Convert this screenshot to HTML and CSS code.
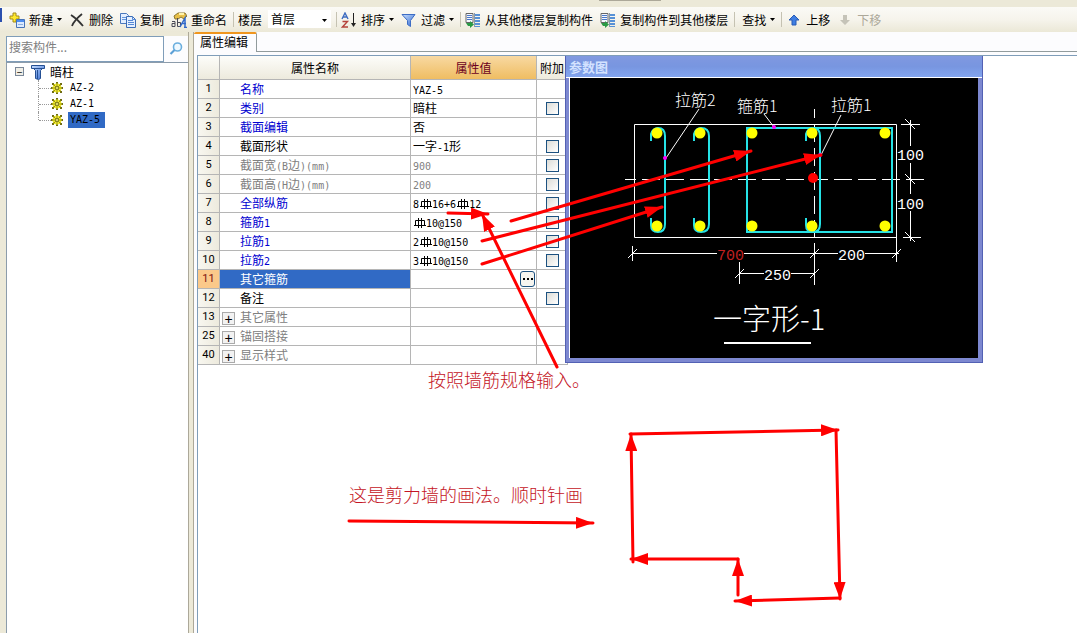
FILE: index.html
```html
<!DOCTYPE html>
<html lang="zh-CN">
<head>
<meta charset="utf-8">
<title>属性编辑</title>
<link rel="stylesheet" href="styles.css">
</head>
<body>
<svg class="defs" width="0" height="0" aria-hidden="true">
  <defs>
    <linearGradient id="blueFill" x1="0" y1="0" x2="1" y2="1"><stop offset="0" stop-color="#c9e0ff"/><stop offset="1" stop-color="#2f66cf"/></linearGradient>
    <symbol id="gear" viewBox="0 0 12 12">
      <path d="M5 0h2v2h2V1h2v2h-1v2h2v2h-2v2h1v2H9v-1H7v2H5v-2H3v1H1V9h1V7H0V5h2V3H1V1h2v1h2z" fill="#6f6c14"/>
      <circle cx="6" cy="6" r="4.500" fill="#f4ee2a"/>
      <path d="M6 2v8M2 6h8M3 3l6 6M9 3l-6 6" stroke="#6d6a10" stroke-width=".7"/>
      <circle cx="6" cy="6" r="1.500" fill="#fffb80" stroke="#55520c" stroke-width=".7"/>
    </symbol>
    <symbol id="rebar" viewBox="0 0 12 12">
      <path d="M4.500 1v10M7.500 1v10M1.500 3.500h9v5h-9zM0 8.500h12" fill="none" stroke="#000"/>
    </symbol>
    <symbol id="caret" viewBox="0 0 5 3"><path d="M0 0h5L2.500 3z" fill="#000"/></symbol>
    <symbol id="copyFloor" viewBox="0 0 16 16">
      <path d="M1 1.500h7v9H1z" fill="#f5f8ff" stroke="#666"/>
      <path d="M2 3.500h5M2 5.500h5M2 7.500h5" stroke="#4a78c8"/>
      <path d="M10 2h5v2h-5zM10 5h5v2h-5zM10 8h5v2h-5zM10 11h5v2h-5zM10 14h5v1h-5z" fill="#5791d6"/>
      <path d="M9.500 1v14" stroke="#8899aa"/>
      <path d="M1 11h4V9l4 3.500L5 16v-2H3z" fill="#2a9a45"/>
    </symbol>
  </defs>
</svg>

<div class="app">
  <div class="frame-top"><span class="frame-notch"></span></div>
  <nav class="toolbar" aria-label="工具栏">
    <button class="tool"><svg class="icon" viewBox="0 0 16 16"><path d="M4 1h3v3h3v3H7v3H4V7H1V4h3z" fill="#ffe92d" stroke="#a28b1d"/><path d="M7.500 7.500h8v8h-8z" fill="#dceaff" stroke="#4773b8"/><path d="M8 8h7v2H8z" fill="#4d8cf0"/><path d="M9 12.500h5" stroke="#90b0dd"/></svg>新建<svg class="caret"><use href="#caret"/></svg></button>
    <button class="tool"><svg class="icon" viewBox="0 0 16 16"><path d="M2 3C7 6 10 9 14 14M13 2C8 6 5 9 3 14" fill="none" stroke="#333" stroke-width="1.800"/></svg>删除</button>
    <button class="tool"><svg class="icon" viewBox="0 0 16 16"><path d="M.5 1.500h6l2 2v8h-8z" fill="#e4efff" stroke="#4a78bd"/><path d="M2 5.500h5M2 7.500h5" stroke="#6698dd"/><path d="M6.500 4.500h6l3 3v8h-9z" fill="#e4efff" stroke="#3c6cb5"/><path d="M12.500 4.500v3h3M8 8.500h5M8 10.500h6M8 12.500h6" fill="none" stroke="#5588d5"/></svg>复制</button>
    <button class="tool"><svg class="icon" viewBox="0 0 16 16"><path d="M3 4l4-3h7l2 3-3 3-3-2-3 2H4z" fill="#e8bf47" stroke="#8b762f"/><path d="M8 2h5" stroke="#fff2a8" stroke-width="2"/><path d="M1 9.500h3v5H1v-3h3M6.500 6v8.500h3v-4H7" fill="none" stroke="#4b4b58"/><path d="M9 15l5-9v9M11 11.500h4M13 15.500h3" fill="none" stroke="#3269ca" stroke-width="1.500"/></svg>重命名</button>
    <span class="sep"></span>
    <label class="tool-label" for="floor">楼层</label>
    <span class="combo"><select id="floor"><option>首层</option></select><svg class="caret"><use href="#caret"/></svg></span>
    <span class="sep"></span>
    <button class="tool"><svg class="icon" viewBox="0 0 16 16"><path d="M1 7l3-6 3 6M2 5h4" fill="none" stroke="#3e6cc0" stroke-width="1.400"/><path d="M1.500 9.500h5l-5 5.500h5.500" fill="none" stroke="#b5433c" stroke-width="1.400"/><path d="M12.500 1v12" stroke="#222"/><path d="M10 11h5l-2.500 4z" fill="#222"/></svg>排序<svg class="caret"><use href="#caret"/></svg></button>
    <button class="tool"><svg class="icon" viewBox="0 0 16 16"><path d="M1 2.500h13L9.500 8.500v6l-3-2v-4z" fill="url(#blueFill)" stroke="#3c6cc4"/></svg>过滤<svg class="caret"><use href="#caret"/></svg></button>
    <span class="sep"></span>
    <button class="tool"><svg class="icon"><use href="#copyFloor"/></svg>从其他楼层复制构件</button>
    <button class="tool"><svg class="icon"><use href="#copyFloor"/></svg>复制构件到其他楼层</button>
    <span class="sep"></span>
    <button class="tool tool-text">查找<svg class="caret"><use href="#caret"/></svg></button>
    <span class="sep"></span>
    <button class="tool"><svg class="icon" viewBox="0 0 16 16"><path d="M8 3l5 5h-3v5H6V8H3z" fill="#3f7ee2" stroke="#285bb5"/></svg>上移</button>
    <button class="tool" disabled><svg class="icon" viewBox="0 0 16 16"><path d="M8 13L3 8h3V3h4v5h3z" fill="#c5c3b8"/></svg>下移</button>
  </nav>

  <div class="body">
    <aside class="sidebar">
      <form class="search">
        <input type="text" placeholder="搜索构件..." aria-label="搜索构件">
        <button type="button" aria-label="搜索"><svg class="icon" viewBox="0 0 16 16"><circle cx="9.500" cy="6" r="4" fill="#eef8ff" stroke="#6aaede" stroke-width="1.600"/><path d="M6.500 9L2.500 13" stroke="#5b9fd6" stroke-width="2.200"/></svg></button>
      </form>
      <div class="tree">
        <div class="tree-root">
          <button class="expander" aria-label="折叠">−</button>
          <svg class="icon" viewBox="0 0 16 16"><path d="M1.500 1.500h13v3h-2l-2 2v8l-2 1-3-1v-8l-2-2h-2z" fill="url(#blueFill)" stroke="#244f93"/><path d="M2 4.500h12M7.500 6v9" stroke="#244f93"/></svg>
          <span>暗柱</span>
        </div>
        <ul class="tree-items">
          <li><svg class="gear"><use href="#gear"/></svg><span class="node">AZ-2</span></li>
          <li><svg class="gear"><use href="#gear"/></svg><span class="node">AZ-1</span></li>
          <li><svg class="gear"><use href="#gear"/></svg><span class="node selected">YAZ-5</span></li>
        </ul>
      </div>
    </aside>
    <div class="splitter"></div>
    <main class="main">
      <div class="tabs"><button class="tab">属性编辑</button><span class="tab-line"></span></div>
      <section class="panel">
        <table class="props">
          <colgroup><col class="c-num"><col class="c-name"><col class="c-value"><col class="c-extra"></colgroup>
          <thead><tr><th></th><th>属性名称</th><th class="hot">属性值</th><th>附加</th></tr></thead>
          <tbody>
            <tr><th>1</th><td class="link">名称</td><td><span class="code">YAZ-5</span></td><td></td></tr>
            <tr><th>2</th><td class="link">类别</td><td>暗柱</td><td><input type="checkbox" aria-label="类别附加"></td></tr>
            <tr><th>3</th><td class="link">截面编辑</td><td>否</td><td></td></tr>
            <tr><th>4</th><td>截面形状</td><td>一字<span class="code">-1</span>形</td><td><input type="checkbox" aria-label="截面形状附加"></td></tr>
            <tr class="muted"><th>5</th><td>截面宽<span class="code">(B</span>边<span class="code">)(mm)</span></td><td><span class="code">900</span></td><td><input type="checkbox" aria-label="截面宽附加"></td></tr>
            <tr class="muted"><th>6</th><td>截面高<span class="code">(H</span>边<span class="code">)(mm)</span></td><td><span class="code">200</span></td><td><input type="checkbox" aria-label="截面高附加"></td></tr>
            <tr><th>7</th><td class="link">全部纵筋</td><td><span class="code">8<svg class="rebar"><use href="#rebar"/></svg>16+6<svg class="rebar"><use href="#rebar"/></svg>12</span></td><td><input type="checkbox" aria-label="全部纵筋附加"></td></tr>
            <tr><th>8</th><td class="link">箍筋<span class="code">1</span></td><td><span class="code"><svg class="rebar"><use href="#rebar"/></svg>10@150</span></td><td><input type="checkbox" aria-label="箍筋1附加"></td></tr>
            <tr><th>9</th><td class="link">拉筋<span class="code">1</span></td><td><span class="code">2<svg class="rebar"><use href="#rebar"/></svg>10@150</span></td><td><input type="checkbox" aria-label="拉筋1附加"></td></tr>
            <tr><th>10</th><td class="link">拉筋<span class="code">2</span></td><td><span class="code">3<svg class="rebar"><use href="#rebar"/></svg>10@150</span></td><td><input type="checkbox" aria-label="拉筋2附加"></td></tr>
            <tr class="current"><th>11</th><td>其它箍筋</td><td><button class="more" aria-label="更多"><svg viewBox="0 0 10 2"><path d="M0 0h2v2H0zM4 0h2v2H4zM8 0h2v2H8z"/></svg></button></td><td></td></tr>
            <tr><th>12</th><td>备注</td><td></td><td><input type="checkbox" aria-label="备注附加"></td></tr>
            <tr class="group"><th>13</th><td><button class="plus" aria-label="展开">+</button>其它属性</td><td></td><td></td></tr>
            <tr class="group"><th>25</th><td><button class="plus" aria-label="展开">+</button>锚固搭接</td><td></td><td></td></tr>
            <tr class="group"><th>40</th><td><button class="plus" aria-label="展开">+</button>显示样式</td><td></td><td></td></tr>
          </tbody>
        </table>

        <section class="dialog" aria-label="参数图">
          <h2>参数图</h2>
          <svg class="drawing" viewBox="570 78 408 280">
            <g class="thin">
              <path d="M634.500 124.500h262v113h-262z"/>
              <path d="M625 179.500h299" stroke-dasharray="18 6" stroke-dashoffset="7"/>
              <path d="M814.500 109v128" stroke-dasharray="18 6" stroke-dashoffset="9"/>
              <path d="M699 109l-33 49M764 114l10 13M841 115l-20 40"/>
              <path d="M901 124.500h19M903 237.500h18M910.500 120v26M910.500 163v31M910.500 211v30"/>
              <path d="M905 119l10 10M905 174l10 10M905 232l10 10"/>
              <path d="M632 253.500h85M744 253.500h94M865 253.500h34M632.500 246v15M814.500 243v42M896.500 237v25"/>
              <path d="M628 258l9-9M810 258l9-9M892 258l9-9"/>
              <path d="M739 273.500h25M791 273.500h24M739.500 262v22M735 278l9-9M810 278l9-9"/>
            </g>
            <path d="M724 343h87" stroke="#fff" stroke-width="2"/>
            <g class="bars">
              <path d="M651 141v-7q2-6 7-6 7 0 7 8v88q0 8-7 8-7 0-7-7v-7"/>
              <path d="M694 141v-7q2-6 7-6 8 0 8 8v88q0 8-8 8-7 0-7-7v-7"/>
              <path d="M806 141v-7q2-6 7-6 7 0 7 8v88q0 8-7 8-7 0-7-7v-7"/>
              <path d="M747 128h145v104H747z"/>
            </g>
            <g fill="#ff0">
              <circle cx="657" cy="133" r="5.500"/><circle cx="700" cy="133" r="5.500"/><circle cx="752" cy="133" r="5.500"/><circle cx="812" cy="133" r="5.500"/><circle cx="885" cy="133" r="5.500"/>
              <circle cx="657" cy="226" r="5.500"/><circle cx="700" cy="226" r="5.500"/><circle cx="752" cy="226" r="5.500"/><circle cx="812" cy="226" r="5.500"/><circle cx="885" cy="226" r="5.500"/>
            </g>
            <circle cx="813" cy="178" r="5" fill="red"/>
            <g fill="#f0f"><circle cx="665" cy="158" r="2"/><circle cx="774" cy="127" r="2"/><circle cx="820" cy="155" r="2"/></g>
            <g class="names"><text x="675" y="106">拉筋2</text><text x="737" y="112">箍筋1</text><text x="831" y="111">拉筋1</text></g>
            <g class="dims"><text x="897" y="160">100</text><text x="897" y="209">100</text><text class="red" x="717" y="260">700</text><text x="838" y="260">200</text><text x="764" y="280">250</text></g>
            <text class="caption" x="713" y="330">一字形-1</text>
          </svg>
        </section>
      </section>
    </main>
  </div>

  <svg class="notes" viewBox="0 0 1077 633" width="1077" height="633">
    <defs><marker id="head" markerUnits="userSpaceOnUse" markerWidth="17" markerHeight="12" refX="17" refY="6" orient="auto"><path d="M0 0l17 6-17 6z" fill="red"/></marker></defs>
    <g class="arrows">
      <path d="M448 213L488 214"/>
      <path d="M557 367L482 214"/>
      <path d="M511 221L751 151"/>
      <path d="M482 241L821 155"/>
      <path d="M482 264L662 207"/>
      <path d="M349 521L593 523"/>
      <path d="M630 434L838 430"/>
      <path d="M836 430L840 599"/>
      <path d="M840 598L735 601"/>
      <path d="M738 595L738 559"/>
      <path d="M738 559L631 559"/>
      <path d="M633 562L631 434"/>
    </g>
    <text x="428" y="387">按照墙筋规格输入。</text>
    <text x="349" y="502">这是剪力墙的画法。顺时针画</text>
  </svg>
</div>
</body>
</html>
```
FILE: styles.css
```css
* { box-sizing: border-box; }

body {
  margin: 0;
  background: #ece9d8;
  color: #000;
  font: 12px/16px "Noto Sans CJK SC", sans-serif;
}

button, input, select { font: inherit; color: inherit; margin: 0; }
button { padding: 0; border: 0; background: none; }

.defs { position: absolute; }

.app {
  position: relative;
  display: flex;
  flex-direction: column;
  min-height: 100vh;
  overflow: hidden;
}

.frame-top { height: 7px; display: flex; justify-content: center; padding-left: 182px; }
.frame-notch { width: 62px; height: 1px; background: #aca899; }

.toolbar {
  display: flex;
  align-items: center;
  height: 25px;
  padding-left: 6px;
  white-space: nowrap;
  background: linear-gradient(#fbfaf6, #f6f4ec 50%, #ebe8d7);
}
.toolbar::before {
  content: "";
  width: 2px;
  height: 14px;
  margin: 0 4px 10px -6px;
  background: #2a4fae;
}

.tool { display: flex; flex: none; align-items: center; gap: 4px; padding: 0 4px 0 3px; }
.tool-text { padding-left: 6px; }
.tool:disabled { color: #aca899; }
.tool-label { padding: 0 3px; }
.icon { width: 16px; height: 16px; flex: none; }
.caret { width: 5px; height: 3px; flex: none; }
.sep { flex: none; width: 1px; height: 15px; margin: 0 1px 0 2px; background: #c5c2b2; }

.combo { position: relative; flex: none; width: 63px; height: 20px; margin: 0 3px; }
.combo select {
  display: block;
  appearance: none;
  width: 100%;
  height: 18px;
  padding: 0 12px 0 3px;
  border: 0;
  background: #fff;
}
.combo .caret { position: absolute; right: 4px; top: 9px; }

.body { display: flex; flex: 1; padding-left: 6px; }

.sidebar { flex: none; width: 182px; display: flex; flex-direction: column; padding-top: 4px; }
.search { display: flex; height: 26px; background: #fcfcfe; }
.search input {
  flex: 1;
  min-width: 0;
  padding: 0 2px 4px;
  border: 1px solid #7f9db9;
  background: #fff;
}
.search input::placeholder { color: #808080; opacity: 1; }
.search button { width: 24px; display: grid; place-items: center; }

.tree { flex: 1; padding: 0 8px; background: #fff; border: 1px solid #8c9cab; border-width: 1px 0 0 1px; }
.tree-root { display: flex; align-items: center; height: 17px; }
.expander {
  width: 9px;
  height: 9px;
  margin-right: 6px;
  border: 1px solid #7b8899;
  background: #f1efe6;
  font-size: 10px;
  line-height: 6px;
}
.tree-root span { margin-left: 4px; }
.tree-items { list-style: none; margin: 0 0 0 23px; padding: 0; }
.tree-items li { display: flex; align-items: center; height: 16px; border-left: 1px dotted #999; }
.tree-items li:last-child { position: relative; border-color: transparent; }
.tree-items li:last-child::after {
  content: "";
  position: absolute;
  left: -1px;
  top: 0;
  height: 8px;
  border-left: 1px dotted #999;
}
.tree-items li::before { content: ""; width: 12px; border-top: 1px dotted #999; }
.gear { width: 12px; height: 12px; }
.node { margin-left: 5px; padding: 0 2px; }
.node, .code { font-family: "DejaVu Sans Mono", monospace; font-size: 10px; }
.code { line-height: 10px; }
.selected { padding-right: 5px; background: #316ac5; }

.splitter { flex: none; width: 6px; border: 1px solid #aca899; border-width: 0 1px; }

.main { flex: 1; min-width: 0; display: flex; flex-direction: column; background: #fcfcfe; }
.tabs { display: flex; height: 20px; margin-bottom: 3px; }
.tab {
  padding: 0 8px 2px 6px;
  border: 1px solid #919b9c;
  border-width: 2px 1px 0 0;
  border-top-color: #f0961e;
  border-radius: 2px 2px 0 0;
}
.tab-line { flex: 1; border-bottom: 1px solid #919b9c; }

.panel {
  position: relative;
  flex: 1;
  margin-left: 3px;
  border: 1px solid #7f9db9;
  border-width: 1px 0 0 1px;
  background: #fff;
}

.props { table-layout: fixed; width: 370px; border-collapse: separate; border-spacing: 0; line-height: 16px; }
.c-num { width: 22px; }
.c-name { width: 191px; }
.c-value { width: 126px; }
.c-extra { width: 31px; }
.props th, .props td {
  height: 19px;
  padding: 0 0 0 2px;
  border: 1px solid #b5b5b5;
  border-width: 0 1px 1px 0;
  font-weight: normal;
  text-align: left;
  white-space: nowrap;
}
.props th { padding: 0; text-align: center; background: linear-gradient(#fdfdfa, #edeadd); }
.props thead th { height: 24px; }
.props thead th.hot { color: #6b0020; background: linear-gradient(#f8d9a2, #efbd62); }
.props tbody th { font-family: Roboto, sans-serif; font-size: 11px; background: linear-gradient(90deg, #f8f7f0, #edeadd); }
.props td:nth-child(2) { padding-left: 20px; }
.props td:last-child { padding: 0; text-align: center; }
.props .link { color: #0000d0; }
.props .muted td, .props .group td { color: #808080; }
.props .current th { color: #801010; background: #fbc98a; }
.props .current td:nth-child(2) { color: #fff; background: #316ac5; }
.props .group td:nth-child(2) { padding-left: 2px; }

.props input {
  appearance: none;
  display: block;
  width: 13px;
  height: 13px;
  margin: 1px auto 0;
  border: 1px solid #1c5180;
  background: linear-gradient(135deg, #dcdcd7, #fff);
}
.rebar { width: 12px; height: 12px; margin-left: 1px; vertical-align: -2px; }
.plus {
  width: 13px;
  height: 13px;
  margin-right: 5px;
  border: 1px solid #aaa;
  background: #f2f2f2;
  color: #000;
  font: 14px/10px "Liberation Sans", sans-serif;
  vertical-align: -2px;
}
.more {
  display: grid;
  place-items: center;
  width: 15px;
  height: 16px;
  margin: 0 1px 0 auto;
  border: 1px solid #1c5180;
  border-radius: 3px;
  background: #f6f5f0;
}
.more svg { width: 10px; height: 2px; }

.dialog {
  position: absolute;
  left: 367px;
  top: 0;
  width: 418px;
  padding: 0 4px 4px 3px;
  border: 1px solid #5361b4;
  border-top: 0;
  background: #7d88d0;
}
.dialog h2 {
  height: 22px;
  margin: 0 -4px 0 -3px;
  padding: 2px 3px 0;
  border-bottom: 1px solid #fff;
  background: linear-gradient(#8098e0, #7896e0 50%, #82a4ee);
  color: #d3e2ff;
  font-size: 13px;
  font-weight: bold;
  line-height: 17px;
}
.drawing { display: block; width: 100%; background: #000; border-left: 1px solid #fff; }
.thin { fill: none; stroke: #fff; stroke-width: 1; }
.bars { fill: none; stroke: #25e2e6; stroke-width: 2; }
.names { fill: #fff; font-size: 16px; font-weight: 300; }
.dims { fill: #fff; font-family: "Liberation Mono", monospace; font-size: 15px; }
.dims .red { fill: #c02020; }
.caption { fill: #fff; font-size: 29px; font-weight: 300; }

.notes { position: absolute; left: 0; top: 0; pointer-events: none; }
.arrows { fill: none; stroke: red; stroke-width: 3; stroke-linecap: round; }
.arrows path { marker-end: url(#head); }
.notes text { fill: #c41424; font-size: 18px; font-weight: 300; }
```
